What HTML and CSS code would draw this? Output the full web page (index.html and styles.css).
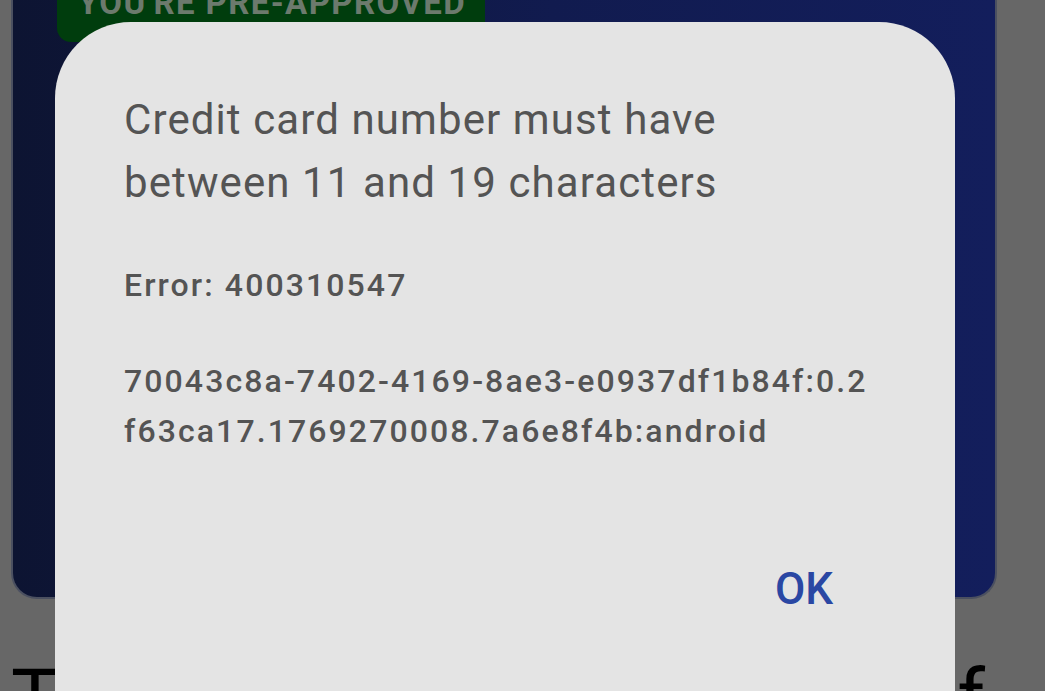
FILE: index.html
```html
<!DOCTYPE html>
<html lang="en">
<head>
    <meta charset="UTF-8">
    <meta name="viewport" content="width=device-width, initial-scale=1.0">
    <title>Card error</title>
    <link rel="stylesheet" href="styles.css">
</head>
<body>
    <div class="page">
        <div class="offer-card">
            <div class="badge">YOU'RE PRE-APPROVED</div>
        </div>
        <div class="headline">
            <span>Take</span>
            <span>of</span>
        </div>
    </div>

    <div class="dialog">
        <p class="dialog-title">Credit card number must have between 11 and 19 characters</p>
        <p class="dialog-code">Error: 400310547</p>
        <p class="dialog-code">70043c8a-7402-4169-8ae3-e0937df1b84f:0.2 f63ca17.1769270008.7a6e8f4b:android</p>
        <div class="dialog-actions">
            <button class="dialog-btn">OK</button>
        </div>
    </div>
</body>
</html>
```

FILE: styles.css
```css
html, body {
    margin: 0;
    height: 100%;
    overflow: hidden;
}
body {
    background-color: #676767;
    font-family: Roboto, "Noto Sans", sans-serif;
    position: relative;
}
.page {
    padding: 0 48px 0 11px;
}
.offer-card {
    height: 597px;
    background: linear-gradient(90deg, #0d1432 0%, #111b4f 55%, #131e5c 100%);
    border: 2px solid #4b5060;
    border-top: none;
    border-radius: 0 0 26px 26px;
    padding-left: 44px;
}
.badge {
    display: inline-block;
    background-color: #003d0d;
    color: #6c7a6d;
    font-size: 33px;
    font-weight: 700;
    letter-spacing: 1.4px;
    line-height: 30px;
    height: 42px;
    padding: 0 19px 0 21px;
    border-radius: 0 0 14px 14px;
    overflow: hidden;
}
.badge::before {
    content: "";
    display: block;
    margin-top: -12px;
}
.headline {
    display: flex;
    justify-content: space-between;
    font-size: 80px;
    color: #000;
    margin-top: 60px;
    padding-right: 12px;
    line-height: 1;
}
.dialog {
    position: absolute;
    left: 55px;
    top: 22px;
    width: 900px;
    height: 760px;
    box-sizing: border-box;
    background-color: #e4e4e4;
    border-radius: 76px;
    padding: 66px 69px 0;
    color: #545454;
}
.dialog p {
    margin: 0;
}
.dialog-title {
    font-size: 42px;
    letter-spacing: 1.1px;
    line-height: 63px;
    width: 640px;
}
.dialog-code {
    font-size: 32px;
    font-weight: 500;
    letter-spacing: 2.1px;
    line-height: 50px;
    margin-top: 46px !important;
}
.dialog-actions {
    display: flex;
    justify-content: flex-end;
    margin-top: 108px;
}
.dialog-btn {
    background: none;
    border: none;
    font-family: inherit;
    font-size: 44px;
    font-weight: 500;
    line-height: 1.172;
    color: #2a47a3;
    padding: 0 53px 0 0;
}
```
